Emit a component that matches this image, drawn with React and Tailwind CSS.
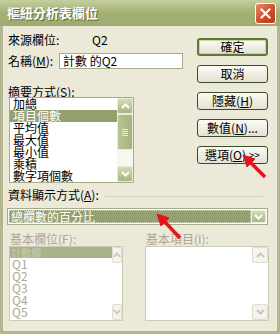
import React from "react";

const F = { fontFamily: '"Noto Sans CJK TC", "Noto Sans", sans-serif' };

function ScrollUp({ disabled }) {
  return (
    <div className={`h-[16px] w-full rounded-[2px] border flex items-center justify-center ${disabled ? "border-[#e0ddd0] bg-[#f4f3ee]" : "border-[#e8ecd8] bg-gradient-to-b from-[#d4dcb4] to-[#a8b584]"}`}>
      <svg width="9" height="6" viewBox="0 0 9 6"><path d="M1 5 L4.5 1.5 L8 5" fill="none" stroke={disabled ? "#c9c7ba" : "#ffffff"} strokeWidth="2" /></svg>
    </div>
  );
}
function ScrollDown({ disabled }) {
  return (
    <div className={`h-[16px] w-full rounded-[2px] border flex items-center justify-center ${disabled ? "border-[#e0ddd0] bg-[#f4f3ee]" : "border-[#e8ecd8] bg-gradient-to-b from-[#d4dcb4] to-[#a8b584]"}`}>
      <svg width="9" height="6" viewBox="0 0 9 6"><path d="M1 1 L4.5 4.5 L8 1" fill="none" stroke={disabled ? "#c9c7ba" : "#ffffff"} strokeWidth="2" /></svg>
    </div>
  );
}

function Btn({ children, def }) {
  return (
    <div className={`h-[18px] w-[71px] rounded-[3px] flex items-center justify-center text-[12px] leading-none text-black bg-gradient-to-b from-[#fbfbf6] to-[#e3e1d2] ${def ? "border-2 border-[#5f7a36] shadow-[inset_0_0_0_1px_#c8d5a8]" : "border border-[#3d4a2c]"}`}>
      {children}
    </div>
  );
}

export default function App() {
  const items = ["加總", "項目個數", "平均值", "最大值", "最小值", "乘積", "數字項個數"];
  return (
    <div className="relative w-[280px] h-[334px] overflow-hidden bg-[#b3b691]" style={F}>
      {/* title bar */}
      <div className="h-[26px] flex items-center justify-between pl-[7px] pr-[4px] bg-gradient-to-b from-[#c5cf9e] via-[#a2b076] to-[#9eac72]">
        <span className="text-[13px] font-bold text-white tracking-[0px] [text-shadow:1px_1px_0_#5f6b3c]">樞紐分析表欄位</span>
        <div className="w-[21px] h-[21px] rounded-[3px] border border-white bg-gradient-to-br from-[#e88a6a] via-[#d0502e] to-[#b83a1c] flex items-center justify-center">
          <svg width="11" height="11" viewBox="0 0 11 11"><path d="M1.5 1.5 L9.5 9.5 M9.5 1.5 L1.5 9.5" stroke="#fff" strokeWidth="2.2" strokeLinecap="square" /></svg>
        </div>
      </div>
      {/* body */}
      <div className="mx-[3px] h-[305px] bg-[#ece9d8] text-[12px] text-black flex flex-col">
        <div className="flex">
          <div className="pl-[5px] w-[181px] flex flex-col">
            <div className="mt-[7px] h-[14px] flex items-center leading-none">
              <span className="w-[84px]">來源欄位:</span>
              <span>Q2</span>
            </div>
            <div className="mt-[6px] h-[16px] flex items-center leading-none">
              <span className="w-[51px]">名稱(<u>M</u>):</span>
              <div className="w-[124px] h-[16px] border border-[#a5ac8a] bg-white flex items-center pl-[3px]">計數 的Q2</div>
            </div>
            <div className="mt-[17px] h-[11px] leading-[11px]">摘要方式(<u>S</u>):</div>
            <div className="ml-[1px] w-[125px] h-[86px] border border-[#a5ac8a] bg-white flex">
              <div className="flex-1 pt-[0px] flex flex-col">
                {items.map((t, i) => (
                  <div key={t} className={`h-[12px] leading-[12px] pl-[3px] ${i === 1 ? "bg-[#94a06e] text-white" : ""}`}>{t}</div>
                ))}
              </div>
              <div className="w-[16px] flex flex-col bg-[#f7f7f2]">
                <ScrollUp />
                <div className="h-[36px] w-full rounded-[2px] border border-[#e8ecd8] bg-gradient-to-r from-[#b9c495] to-[#a6b282] flex flex-col items-center justify-center gap-[1px]">
                  <div className="w-[6px] h-[1px] bg-[#e6ecd2]" />
                  <div className="w-[6px] h-[1px] bg-[#e6ecd2]" />
                  <div className="w-[6px] h-[1px] bg-[#e6ecd2]" />
                  <div className="w-[6px] h-[1px] bg-[#e6ecd2]" />
                </div>
                <div className="flex-1" />
                <ScrollDown />
              </div>
            </div>
          </div>
          <div className="ml-[13px] mt-[12px] flex flex-col gap-[9px]">
            <Btn def>確定</Btn>
            <Btn>取消</Btn>
            <Btn>隱藏(<u>H</u>)</Btn>
            <Btn>數值(<u>N</u>)...</Btn>
            <Btn><span>選項(<u>O</u>)</span><span className="ml-[3px] text-[10px]">&gt;&gt;</span></Btn>
          </div>
        </div>
        {/* group */}
        <div className="mt-[5px] ml-[5px] flex items-center h-[13px]">
          <span className="leading-none">資料顯示方式(<u>A</u>):</span>
          <div className="ml-[6px] mt-[3px] w-[158px] h-[1px] bg-[#d0d0bf]" />
        </div>
        <div className="mt-[7px] ml-[4px] w-[261px] h-[17px] border border-[#a5ac8a] bg-white flex p-[1px]">
          <div className="flex-1 bg-[#94a06e] text-white leading-[13px] pl-[2px] outline-1 outline-dotted outline-[#d9dcc8] -outline-offset-1">總欄數的百分比</div>
          <div className="w-[15px] rounded-[2px] border border-[#e8ecd8] bg-gradient-to-b from-[#d4dcb4] to-[#a8b584] flex items-center justify-center">
            <svg width="9" height="6" viewBox="0 0 9 6"><path d="M1 1 L4.5 4.5 L8 1" fill="none" stroke="#fff" strokeWidth="2" /></svg>
          </div>
        </div>
        <div className="mt-[7px] flex text-[#aca899]">
          <div className="ml-[6px] w-[135px] flex flex-col">
            <div className="h-[13px] leading-[13px] pl-[1px]">基本欄位(F):</div>
            <div className="mt-[1px] w-[114px] h-[75px] border border-[#c9ccb4] bg-white flex">
              <div className="flex-1 flex flex-col">
                <div className="h-[11px] bg-[#a9b28a] text-[#c6cab0] leading-[11px] pl-[1px] text-[10px]">計數欄</div>
                {["Q1", "Q2", "Q3", "Q4", "Q5"].map((q) => (
                  <div key={q} className="h-[12px] leading-[12px] pl-[2px]">{q}</div>
                ))}
              </div>
              <div className="w-[10px] flex flex-col">
                <ScrollUp disabled />
                <div className="flex-1" />
                <ScrollDown disabled />
              </div>
            </div>
          </div>
          <div className="ml-[1px] flex flex-col">
            <div className="h-[13px] leading-[13px] pl-[1px]">基本項目(I):</div>
            <div className="mt-[1px] w-[124px] h-[75px] border border-[#c9ccb4] bg-white flex">
              <div className="flex-1" />
              <div className="w-[16px] flex flex-col">
                <ScrollUp disabled />
                <div className="flex-1" />
                <ScrollDown disabled />
              </div>
            </div>
          </div>
        </div>
      </div>
      {/* red arrows */}
      <svg className="absolute left-0 top-0 pointer-events-none" width="280" height="334">
        <g fill="#e5141c" stroke="#e5141c">
          <line x1="265" y1="177" x2="249" y2="161" strokeWidth="3.5" />
          <polygon points="243,155 255,159 247,167" strokeWidth="1" />
          <line x1="180" y1="238" x2="163" y2="220" strokeWidth="3.5" />
          <polygon points="157,214 169,218 161,226" strokeWidth="1" />
        </g>
      </svg>
    </div>
  );
}
